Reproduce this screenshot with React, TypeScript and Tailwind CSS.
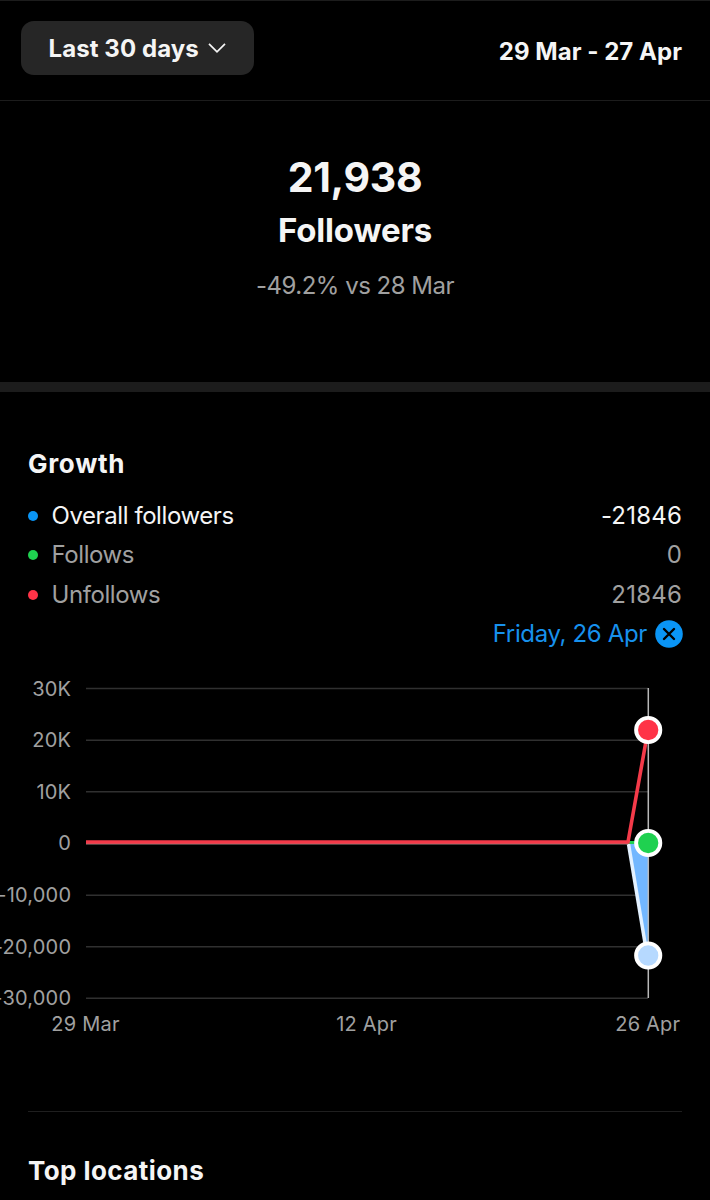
import React from 'react';

const legend = [
  { label: 'Overall followers', value: '-21846', dot: 'bg-[#0a95f6]', text: 'text-[#f5f5f5]' },
  { label: 'Follows', value: '0', dot: 'bg-[#1fd150]', text: 'text-[#a0a0a0]' },
  { label: 'Unfollows', value: '21846', dot: 'bg-[#ff3347]', text: 'text-[#a0a0a0]' },
];

const yTicks = [
  { label: '30K', y: 18.5 },
  { label: '20K', y: 70.2 },
  { label: '10K', y: 121.8 },
  { label: '0', y: 173.3 },
  { label: '-10,000', y: 225.2 },
  { label: '-20,000', y: 276.8 },
  { label: '-30,000', y: 328.3 },
];

const xTicks = [
  { label: '29 Mar', x: 85.5 },
  { label: '12 Apr', x: 366.5 },
  { label: '26 Apr', x: 647.8 },
];

const GrowthChart: React.FC = () => (
  <svg viewBox="0 0 710 370" className="block h-[370px] w-[710px] text-[20px]">
    {/* Grid lines */}
    {yTicks.map((tick) => (
      <g key={tick.label}>
        <line x1="86" x2="648" y1={tick.y} y2={tick.y} stroke="#303030" strokeWidth="1.5" />
        <text x="71.2" y={tick.y + 7} textAnchor="end" fill="#a0a0a0" letterSpacing="0.2">
          {tick.label}
        </text>
      </g>
    ))}

    {xTicks.map((tick) => (
      <text key={tick.label} x={tick.x} y="361" textAnchor="middle" fill="#a0a0a0" letterSpacing="0.2">
        {tick.label}
      </text>
    ))}

    {/* Overall followers */}
    <polygon points="628,173 648,173 648,285" fill="#72b7ff" />
    <line x1="628.5" y1="174" x2="647" y2="285" stroke="#e3f1ff" strokeWidth="3.5" />

    <line x1="648.3" x2="648.3" y1="18" y2="328" stroke="#b8b8b8" strokeWidth="1.5" />

    {/* Follows and unfollows */}
    <line x1="86" x2="628" y1="173.5" y2="173.5" stroke="#a08480" strokeWidth="2" />
    <line x1="628" x2="648" y1="172.5" y2="172.5" stroke="#1fd150" strokeWidth="3" />
    <polyline points="86,172 628,172 648,60" fill="none" stroke="#f43a49" strokeWidth="3.6" />

    <circle cx="648.2" cy="60" r="12.1" fill="#ff3347" stroke="#fff" strokeWidth="3.9" />
    <circle cx="648.2" cy="173" r="12.1" fill="#1fd150" stroke="#fff" strokeWidth="3.9" />
    <circle cx="648.2" cy="285.5" r="12.1" fill="#b6d9ff" stroke="#fff" strokeWidth="3.9" />
  </svg>
);

const App: React.FC = () => {
  return (
    <div className="h-[1200px] w-[710px] overflow-hidden bg-black font-['Inter',sans-serif] text-[#f5f5f5]">
      {/* Date range */}
      <header className="flex h-[101px] items-start justify-between border-y-[1.5px] border-[#1c1c1c] pt-5 pr-7 pl-[21px]">
        <button className="flex h-[54px] w-[233px] items-center rounded-[13px] bg-[#262626] pl-[27.5px] text-[24px] font-bold">
          <span className="pt-0.5 tracking-[0.08px]">Last 30 days</span>
          <svg viewBox="0 0 18 10" className="ml-[9px] h-[10px] w-[18px]" fill="none" stroke="#f5f5f5" strokeWidth="1.7">
            <path d="M1 .8 9 8.8 17 .8" />
          </svg>
        </button>
        <span className="pt-[13px] text-[24px] leading-9 font-bold tracking-[0.04px]">29 Mar - 27 Apr</span>
      </header>

      <section className="flex h-[281px] flex-col items-center pt-[50px]">
        <h1 className="text-[41px] leading-[52px] font-bold tracking-[-0.3px]">21,938</h1>
        <h2 className="text-[33px] leading-[54px] font-bold tracking-[-0.15px]">Followers</h2>
        <p className="mt-[11px] text-[24px] leading-9 tracking-[-0.5px] text-[#a0a0a0]">-49.2% vs 28 Mar</p>
      </section>

      <div className="h-[10px] bg-[#1c1c1c]" />

      <section className="h-[278px] px-7 pt-[54px]">
        <h3 className="text-[26px] leading-9 font-bold tracking-[0.7px]">Growth</h3>
        <div className="mt-[14px]">
          {legend.map((item) => (
            <div key={item.label} className={`flex h-[39.5px] items-center text-[24px] ${item.text}`}>
              <span className={`mr-[13.5px] size-[10px] rounded-full ${item.dot}`} />
              <span className="tracking-[-0.42px]">{item.label}</span>
              <span className="ml-auto tracking-[0.2px]">{item.value}</span>
            </div>
          ))}
        </div>
        <div className="-mr-px flex h-[39.5px] items-center justify-end gap-2 text-[24px] text-[#1791ed]">
          <span className="tracking-[-0.35px]">Friday, 26 Apr</span>
          <svg viewBox="0 0 28 28" className="size-7">
            <circle cx="14" cy="14" r="13.8" fill="#0a95f6" />
            <path d="m9 9 10 10M19 9 9 19" stroke="#000" strokeWidth="2.4" strokeLinecap="round" />
          </svg>
        </div>
      </section>

      <GrowthChart />

      <section className="mx-7 mt-[71px] border-t-[1.5px] border-[#1f1f1f] pt-[41px]">
        <h3 className="text-[26px] leading-9 font-bold tracking-[0.42px]">Top locations</h3>
      </section>
    </div>
  );
};

export default App;
